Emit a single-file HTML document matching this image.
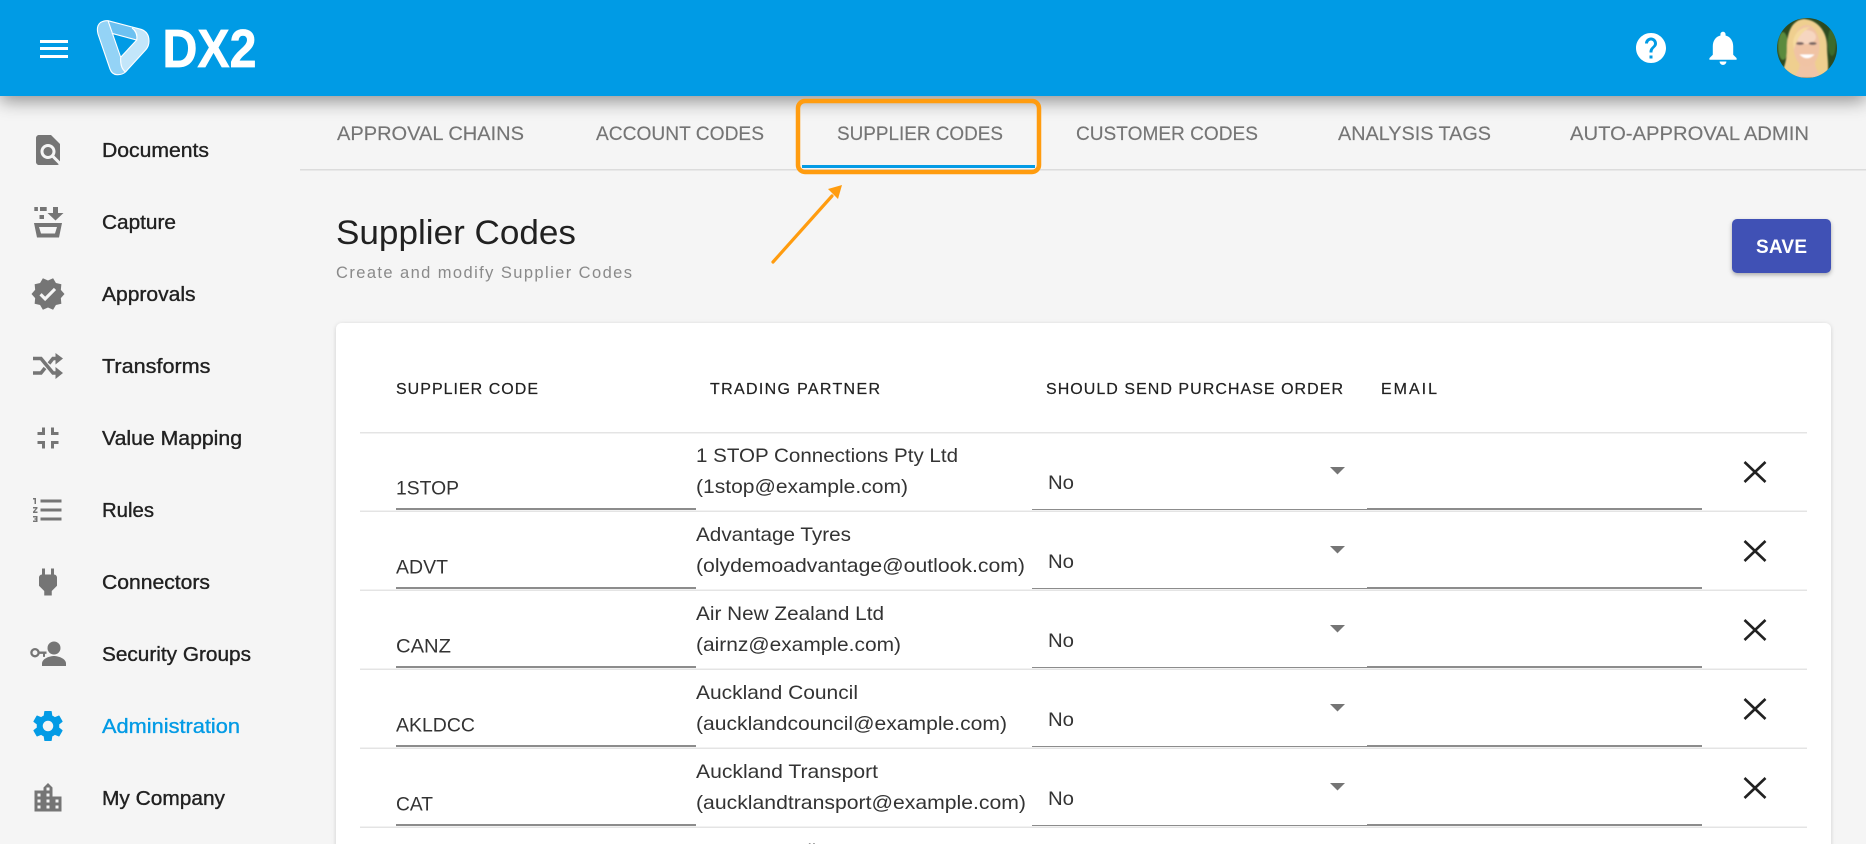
<!DOCTYPE html>
<html><head><meta charset="utf-8"><title>Supplier Codes</title>
<style>
html,body{margin:0;padding:0;background:#f5f5f5;width:1866px;height:844px;overflow:hidden}
svg{display:block;position:absolute;left:0;top:0}
text{font-family:"Liberation Sans",sans-serif}
.nav{font-size:20px;fill:#212121;stroke:#212121;stroke-width:.35px}
.tab{font-size:19.5px;fill:#757575;stroke:#757575;stroke-width:.15px}
.th{font-size:16px;fill:#212121;stroke:#212121;stroke-width:.2px}
.td{font-size:19.5px;fill:#333}
.ic{fill:#757575}
</style></head><body>
<svg width="1866" height="844" viewBox="0 0 1866 844" xmlns="http://www.w3.org/2000/svg">
<defs>
<filter id="sh" x="-5%" y="-30%" width="110%" height="180%"><feDropShadow dx="0" dy="5" stdDeviation="9" flood-color="#000" flood-opacity=".42"/></filter>
<filter id="cs" x="-3%" y="-3%" width="106%" height="106%"><feDropShadow dx="0" dy="1" stdDeviation="2" flood-color="#000" flood-opacity=".16"/></filter>
<filter id="bs" x="-20%" y="-20%" width="140%" height="150%"><feDropShadow dx="0" dy="2" stdDeviation="2" flood-color="#000" flood-opacity=".3"/></filter>
<filter id="bl"><feGaussianBlur stdDeviation=".8"/></filter>
<clipPath id="av"><circle cx="1807" cy="48" r="30"/></clipPath>
<g id="rowbits">
<rect x="396" y="508" width="300" height="2" fill="#8c8c8c"/>
<rect x="1032" y="509" width="335" height="1" fill="#8c8c8c"/>
<rect x="1367" y="508" width="335" height="2" fill="#8c8c8c"/>
<rect x="360" y="510.5" width="1447" height="1.5" fill="#e4e4e4"/>
<path d="M1330 467h15l-7.500 7.500z" fill="#757575"/>
<path d="M1744.500 462l21 20M1765.500 462l-21 20" stroke="#212121" stroke-width="2.600" fill="none"/>
<text class="td" x="1048" y="489" textLength="26" lengthAdjust="spacingAndGlyphs">No</text>
</g>
</defs>

<rect width="1866" height="844" fill="#f5f5f5"/>

<!-- tabs -->
<rect x="300" y="169" width="1566" height="1.500" fill="#dcdcdc"/>
<rect x="802" y="165" width="233" height="3" fill="#039be5"/>
<text class="tab" x="337" y="140" textLength="187" lengthAdjust="spacingAndGlyphs">APPROVAL CHAINS</text>
<text class="tab" x="596" y="140" textLength="168" lengthAdjust="spacingAndGlyphs">ACCOUNT CODES</text>
<text class="tab" x="837" y="140" textLength="166" lengthAdjust="spacingAndGlyphs">SUPPLIER CODES</text>
<text class="tab" x="1076" y="140" textLength="182" lengthAdjust="spacingAndGlyphs">CUSTOMER CODES</text>
<text class="tab" x="1338" y="140" textLength="153" lengthAdjust="spacingAndGlyphs">ANALYSIS TAGS</text>
<text class="tab" x="1570" y="140" textLength="239" lengthAdjust="spacingAndGlyphs">AUTO-APPROVAL ADMIN</text>

<!-- header -->
<rect x="0" y="0" width="1866" height="96" fill="#039be5" filter="url(#sh)"/>
<rect x="40" y="40" width="28" height="3" fill="#fff"/>
<rect x="40" y="47" width="28" height="3" fill="#fff"/>
<rect x="40" y="55" width="28" height="3" fill="#fff"/>

<!-- logo -->
<path d="M108 20.700Q104 20.300 100.500 22.500Q96 26 98 34L110 69Q112 74.500 117 74.700Q122 75 125.500 72Q120 69 120.700 59L108 20.700Z" fill="#94d3f6"/>
<path d="M108 20.700L138 28.500Q137 34 136.700 40L111.700 33.300Z" fill="#6dc1f1"/>
<path d="M138 28.500L141 29.300Q149 32 149 41Q149 46 146 49.500L125.500 72Q119 68 120.700 57.300L136.700 40Q137 34 132 28Z" fill="#c3e6fa"/>
<path d="M108 20.700L141 29.300Q149 32 149 41Q149 46 146 49.500L125.500 72Q122 75 117 74.700Q112 74.500 110 69L98 34Q96 26 100.500 22.500Q104 20.300 108 20.700ZM108 20.700L120.700 57.300Q120 68 125.500 72M111.700 33.300L136.700 40Q138 32 132 28M136.700 40L120.700 57.300" fill="none" stroke="#fff" stroke-width="1.100"/>
<text x="162.500" y="67" font-size="54" font-weight="700" fill="#fff" stroke="#fff" stroke-width=".7" textLength="94" lengthAdjust="spacingAndGlyphs">DX2</text>

<!-- header right -->
<g fill="#fff">
<path transform="translate(1633 30) scale(1.5)" d="M12 2C6.480 2 2 6.480 2 12s4.480 10 10 10 10-4.480 10-10S17.520 2 12 2zm1 17h-2v-2h2v2zm2.070-7.750l-.9.920C13.450 12.900 13 13.500 13 15h-2v-.5c0-1.100.45-2.100 1.170-2.830l1.240-1.260c.37-.36.59-.86.59-1.410 0-1.100-.9-2-2-2s-2 .9-2 2H8c0-2.210 1.790-4 4-4s4 1.790 4 4c0 .88-.36 1.680-.93 2.250z"/>
<path transform="translate(1702.600 27.500) scale(1.700)" d="M12 22c1.100 0 2-.9 2-2h-4c0 1.100.89 2 2 2zm6-6v-5c0-3.070-1.640-5.640-4.500-6.320V4c0-.83-.67-1.500-1.500-1.500s-1.500.67-1.500 1.500v.68C7.630 5.360 6 7.920 6 11v5l-2 2v1h16v-1l-2-2z"/>
</g>
<g clip-path="url(#av)">
<rect x="1777" y="18" width="60" height="60" fill="#2c4a20"/>
<g filter="url(#bl)">
<ellipse cx="1783" cy="46" rx="5" ry="14" fill="#5a8a3c"/>
<ellipse cx="1832" cy="42" rx="4" ry="14" fill="#3d6a2c"/>
<path d="M1804 19C1792 20 1787 32 1787 48C1787 60 1784 68 1782 72L1790 78H1826C1830 70 1827 58 1827 46C1827 32 1818 20 1804 19Z" fill="#efcf8f"/>
<path d="M1793 78C1798 72 1800 68 1800 62L1815 62C1815 68 1818 72 1822 78Z" fill="#f0c4a6"/>
<ellipse cx="1806.500" cy="46" rx="13" ry="21" fill="#f0c3a4"/>
<ellipse cx="1806" cy="37" rx="10" ry="7" fill="#f6d6c0"/>
<path d="M1793 42C1795 31 1802 27 1810 27C1804 31 1797 36 1794 50Z" fill="#f5da9f"/>
<ellipse cx="1800" cy="43.500" rx="4" ry="1.500" fill="#7a6663"/>
<ellipse cx="1812.700" cy="43.500" rx="4" ry="1.500" fill="#7a6663"/>
<path d="M1799.500 54.500Q1807 62 1814.500 54.500Z" fill="#fff"/>
</g>
</g>

<!-- sidebar icons -->
<g class="ic">
<path transform="translate(30 132) scale(1.5)" d="M20 19.590V8l-6-6H6c-1.100 0-1.990.9-1.990 2L4 20c0 1.100.89 2 1.990 2H18c.45 0 .85-.15 1.190-.4l-4.430-4.430c-.8.520-1.740.83-2.760.83-2.760 0-5-2.240-5-5s2.240-5 5-5 5 2.240 5 5c0 1.020-.31 1.960-.83 2.750L20 19.590zM9 13c0 1.660 1.340 3 3 3s3-1.340 3-3-1.340-3-3-3-3 1.340-3 3z"/>
<!-- capture -->
<rect x="34.300" y="207" width="3.600" height="4"/><rect x="40" y="207" width="6.700" height="4"/><rect x="39.500" y="215" width="4.500" height="4"/>
<path d="M53 207h5v6h5.500l-8 7.500-8-7.500h5.500z"/>
<path d="M34 223H62L59 237.500H37ZM39 227L41 233.500H55L57 227Z" fill-rule="evenodd"/>
<path transform="translate(30 276) scale(1.5)" d="M23 12l-2.440-2.790.34-3.690-3.610-.82-1.890-3.200L12 2.960 8.600 1.500 6.710 4.690 3.100 5.500l.34 3.700L1 12l2.440 2.790-.34 3.700 3.610.82L8.600 22.500l3.400-1.470 3.400 1.460 1.890-3.190 3.610-.82-.34-3.690L23 12zm-12.910 4.720l-3.800-3.810 1.480-1.480 2.320 2.330 5.850-5.870 1.480 1.480-7.330 7.350z"/>
<!-- transforms -->
<path d="M33 358.500H41L53 373H58M33 373H41L45 368M49 363.500L53 358.500H58" fill="none" stroke="#757575" stroke-width="3.500"/>
<path d="M55.500 353L63 358.500L55.500 364.500zM55.500 367L63 373L55.500 379z"/>
<path transform="translate(30 420) scale(1.5)" d="M5 16h3v3h2v-5H5v2zm3-8H5v2h5V5H8v3zm6 11h2v-3h3v-2h-5v5zm2-11V5h-2v5h5V8h-3z"/>
<path transform="translate(30 492) scale(1.5)" d="M2 17h2v.5H3v1h1v.5H2v1h3v-4H2v1zm1-9h1V4H2v1h1v3zm-1 3h1.800L2 13.100v.9h3v-1H3.200L5 10.900V10H2v1zm5-6v2h14V5H7zm0 14h14v-2H7v2zm0-6h14v-2H7v2z"/>
<path transform="translate(30 564) scale(1.5)" d="M16.010 7L16 3h-2v4h-4V3H8v4h-.01C7 6.990 6 7.990 6 8.990v5.490L9.500 18v3h5v-3l3.500-3.510v-5.500c0-1-1-2-1.990-1.990z"/>
<!-- security -->
<circle cx="54" cy="648" r="6.500"/>
<path d="M42 666v-2.500c0-5 8-7.500 12-7.500s12 2.500 12 7.500v2.500z"/>
<circle cx="35" cy="652.700" r="3.600" fill="none" stroke="#757575" stroke-width="2.300"/>
<path d="M38.500 651.500h8v2.400h-1.500v3h-2v-3H38.500z"/>
<path transform="translate(30 708) scale(1.5)" fill="#039be5" d="M19.430 12.980c.04-.32.07-.64.07-.98s-.03-.66-.07-.98l2.110-1.650c.19-.15.24-.42.12-.64l-2-3.460c-.12-.22-.39-.3-.61-.22l-2.490 1c-.52-.4-1.080-.73-1.690-.98l-.38-2.650C14.460 2.180 14.250 2 14 2h-4c-.25 0-.46.18-.49.42l-.38 2.650c-.61.25-1.170.59-1.690.98l-2.490-1c-.23-.09-.49 0-.61.22l-2 3.460c-.13.22-.07.49.12.64l2.110 1.650c-.04.32-.07.65-.07.98s.03.66.07.98l-2.110 1.650c-.19.15-.24.42-.12.64l2 3.460c.12.22.39.3.61.22l2.490-1c.52.4 1.080.73 1.690.98l.38 2.650c.03.24.24.42.49.42h4c.25 0 .46-.18.49-.42l.38-2.650c.61-.25 1.170-.59 1.690-.98l2.490 1c.23.09.49 0 .61-.22l2-3.460c.12-.22.07-.49-.12-.64l-2.110-1.650zM12 15.500c-1.930 0-3.500-1.570-3.500-3.500s1.570-3.500 3.500-3.500 3.500 1.570 3.500 3.500-1.570 3.500-3.500 3.500z"/>
<path transform="translate(30 780) scale(1.5)" d="M15 11V5l-3-3-3 3v2H3v14h18V11h-6zm-8 8H5v-2h2v2zm0-4H5v-2h2v2zm0-4H5V9h2v2zm6 8h-2v-2h2v2zm0-4h-2v-2h2v2zm0-4h-2V9h2v2zm0-4h-2V5h2v2zm6 12h-2v-2h2v2zm0-4h-2v-2h2v2z"/>
</g>

<!-- sidebar labels -->
<text class="nav" x="102" y="157" textLength="107" lengthAdjust="spacingAndGlyphs">Documents</text>
<text class="nav" x="102" y="229" textLength="74" lengthAdjust="spacingAndGlyphs">Capture</text>
<text class="nav" x="102" y="301" textLength="93.500" lengthAdjust="spacingAndGlyphs">Approvals</text>
<text class="nav" x="102" y="373" textLength="108.500" lengthAdjust="spacingAndGlyphs">Transforms</text>
<text class="nav" x="102" y="445" textLength="140" lengthAdjust="spacingAndGlyphs">Value Mapping</text>
<text class="nav" x="102" y="517" textLength="52" lengthAdjust="spacingAndGlyphs">Rules</text>
<text class="nav" x="102" y="589" textLength="108" lengthAdjust="spacingAndGlyphs">Connectors</text>
<text class="nav" x="102" y="661" textLength="149" lengthAdjust="spacingAndGlyphs">Security Groups</text>
<text class="nav" x="102" y="733" textLength="138" lengthAdjust="spacingAndGlyphs" style="fill:#039be5;stroke:#039be5">Administration</text>
<text class="nav" x="102" y="805" textLength="123" lengthAdjust="spacingAndGlyphs">My Company</text>

<!-- title -->
<text x="336" y="244" font-size="34" fill="#212121" textLength="240" lengthAdjust="spacingAndGlyphs">Supplier Codes</text>
<text x="336" y="278" font-size="16.500" fill="#8a8a8a" textLength="296">Create and modify Supplier Codes</text>

<!-- save -->
<rect x="1732" y="219" width="99" height="54" rx="5" fill="#3f51b5" filter="url(#bs)"/>
<text x="1756" y="253" font-size="19" font-weight="700" fill="#fff" textLength="51">SAVE</text>

<!-- card -->
<rect x="336" y="323" width="1495" height="540" rx="6" fill="#fff" filter="url(#cs)"/>
<text class="th" x="396" y="394" textLength="142">SUPPLIER CODE</text>
<text class="th" x="710" y="394" textLength="170">TRADING PARTNER</text>
<text class="th" x="1046" y="394" textLength="297">SHOULD SEND PURCHASE ORDER</text>
<text class="th" x="1381" y="394" textLength="56">EMAIL</text>
<rect x="360" y="432" width="1447" height="1.500" fill="#e4e4e4"/>

<use href="#rowbits"/>
<use href="#rowbits" y="79"/>
<use href="#rowbits" y="158"/>
<use href="#rowbits" y="237"/>
<use href="#rowbits" y="316"/>

<text class="td" x="396" y="494.300" textLength="63" lengthAdjust="spacingAndGlyphs">1STOP</text>
<text class="td" x="396" y="573.300" textLength="52" lengthAdjust="spacingAndGlyphs">ADVT</text>
<text class="td" x="396" y="652.300" textLength="55" lengthAdjust="spacingAndGlyphs">CANZ</text>
<text class="td" x="396" y="731.700" textLength="79" lengthAdjust="spacingAndGlyphs">AKLDCC</text>
<text class="td" x="396" y="810.700" textLength="37" lengthAdjust="spacingAndGlyphs">CAT</text>

<text class="td" x="696" y="462" textLength="262" lengthAdjust="spacingAndGlyphs">1 STOP Connections Pty Ltd</text>
<text class="td" x="696" y="493" textLength="212" lengthAdjust="spacingAndGlyphs">(1stop@example.com)</text>
<text class="td" x="696" y="541" textLength="155" lengthAdjust="spacingAndGlyphs">Advantage Tyres</text>
<text class="td" x="696" y="572" textLength="329" lengthAdjust="spacingAndGlyphs">(olydemoadvantage@outlook.com)</text>
<text class="td" x="696" y="620" textLength="188" lengthAdjust="spacingAndGlyphs">Air New Zealand Ltd</text>
<text class="td" x="696" y="651" textLength="205" lengthAdjust="spacingAndGlyphs">(airnz@example.com)</text>
<text class="td" x="696" y="699" textLength="162" lengthAdjust="spacingAndGlyphs">Auckland Council</text>
<text class="td" x="696" y="730" textLength="311" lengthAdjust="spacingAndGlyphs">(aucklandcouncil@example.com)</text>
<text class="td" x="696" y="778" textLength="182" lengthAdjust="spacingAndGlyphs">Auckland Transport</text>
<text class="td" x="696" y="809" textLength="330" lengthAdjust="spacingAndGlyphs">(aucklandtransport@example.com)</text>
<text class="td" x="696" y="857.500" textLength="120" lengthAdjust="spacingAndGlyphs">Commerce Oil</text>

<!-- annotation -->
<rect x="798" y="101" width="241" height="71" rx="7" fill="none" stroke="#ff9c0f" stroke-width="4.500"/>
<path d="M773 262L832 196" stroke="#ff9c0f" stroke-width="3.200" stroke-linecap="round" fill="none"/>
<path d="M842 185L828 189L838 199Z" fill="#ff9c0f"/>
</svg>
</body></html>
